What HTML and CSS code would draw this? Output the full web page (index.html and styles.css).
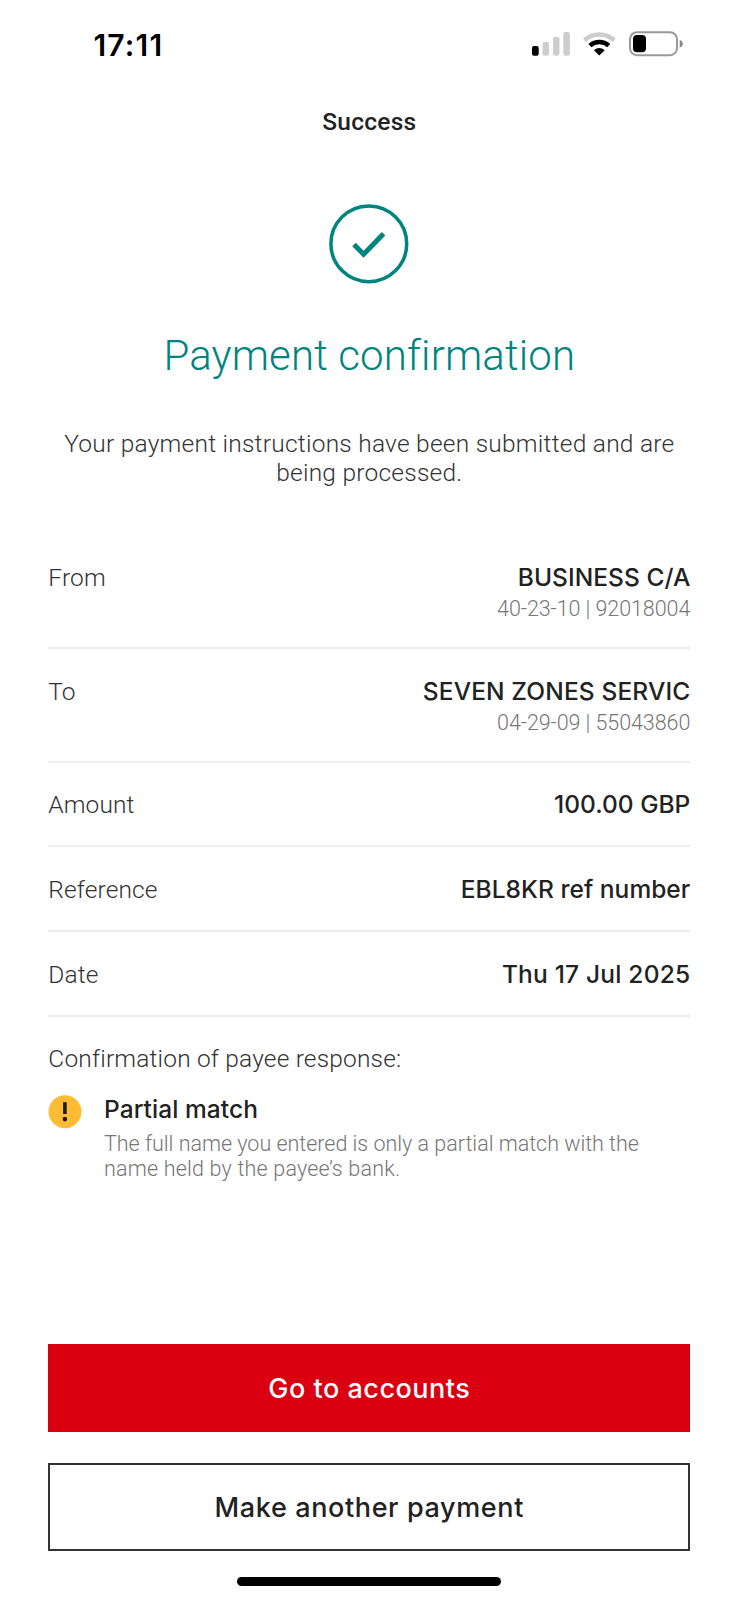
FILE: index.html
```
<!DOCTYPE html>
<html lang="en">
<head>
<meta charset="utf-8">
<title>Payment confirmation</title>
<link rel="stylesheet" href="styles.css">
</head>
<body>
<div class="screen">
  <div class="status-bar">
    <span class="clock">17:11</span>
    <svg class="status-icons" width="152" height="26" viewBox="532 31 152 26" aria-hidden="true">
      <rect x="532" y="46" width="6.7" height="9.8" rx="2" fill="#000"/>
      <g fill="#cdcdcd">
        <rect x="542.6" y="42" width="6.5" height="13.8" rx="2"/>
        <rect x="553" y="37" width="6.5" height="18.8" rx="2"/>
        <rect x="563.3" y="32" width="6.6" height="23.8" rx="2"/>
      </g>
      <path d="M584.4 40.3A22.2 22.2 0 0 1 614.2 40.3" fill="none" stroke="#cdcdcd" stroke-width="4.6"/>
      <path d="M589.9 45.6A14.2 14.2 0 0 1 608.7 45.6" fill="none" stroke="#000" stroke-width="4.6"/>
      <path d="M599.3 55.6L593.9 50.2Q599.3 45.6 604.7 50.2Z" fill="#000"/>
      <rect x="630" y="32.2" width="47" height="23" rx="7" fill="none" stroke="#999" stroke-width="2"/>
      <rect x="633" y="35" width="13" height="17.2" rx="4" fill="#000"/>
      <path d="M679.7 39.9Q682.8 40.8 682.8 43.7T679.7 47.5Z" fill="#888"/>
    </svg>
  </div>

  <header class="page-title">Success</header>

  <svg class="success-icon" width="80" height="80" viewBox="0 0 80 80" aria-hidden="true">
    <circle cx="39.8" cy="39.8" r="37.9" fill="none" stroke="#00847f" stroke-width="3.5"/>
    <path d="M25 40.6L34.6 50.2L54.6 29.8" fill="none" stroke="#00847f" stroke-width="5"/>
  </svg>

  <h1 class="heading">Payment confirmation</h1>
  <p class="message">Your payment instructions have been submitted and are<br>being processed.</p>

  <div class="details">
    <div class="row">
      <span class="label">From</span>
      <div class="value">
        <div class="main">BUSINESS C/A</div>
        <div class="sub">40-23-10 | 92018004</div>
      </div>
    </div>
    <div class="row">
      <span class="label">To</span>
      <div class="value">
        <div class="main name">SEVEN ZONES SERVIC</div>
        <div class="sub">04-29-09 | 55043860</div>
      </div>
    </div>
    <div class="row">
      <span class="label">Amount</span>
      <div class="value"><div class="main amount">100.00 GBP</div></div>
    </div>
    <div class="row">
      <span class="label">Reference</span>
      <div class="value"><div class="main">EBL8KR ref number</div></div>
    </div>
    <div class="row">
      <span class="label">Date</span>
      <div class="value"><div class="main date">Thu 17 Jul 2025</div></div>
    </div>
  </div>

  <div class="payee-title">Confirmation of payee response:</div>
  <div class="notice">
    <svg class="warning-icon" width="34" height="34" viewBox="0 0 34 34" aria-hidden="true">
      <circle cx="17" cy="16.7" r="16.5" fill="#ffbb33"/>
      <rect x="15.1" y="7.2" width="3.6" height="11.8" fill="#1a1a1a"/>
      <circle cx="16.9" cy="24.1" r="2.3" fill="#1a1a1a"/>
    </svg>
    <div class="notice-body">
      <div class="notice-title">Partial match</div>
      <p class="notice-text">The full name you entered is only a partial match with the<br><span class="second-line">name held by the payee’s bank.</span></p>
    </div>
  </div>

  <div class="actions">
    <button class="button primary">Go to accounts</button>
    <button class="button secondary">Make another payment</button>
  </div>
  <div class="home-indicator"></div>
</div>
</body>
</html>
```

FILE: styles.css
```
* {
  box-sizing: border-box;
}

body {
  margin: 0;
  background: #fff;
  color: #333;
  font-family: Roboto, "Liberation Sans", sans-serif;
  font-size: 24.5px;
  font-weight: 300;
}

.screen {
  width: 739px;
  height: 1600px;
  padding: 0 48.7px 0 48.3px;
  overflow: hidden;
  display: flex;
  flex-direction: column;
}

.status-bar {
  height: 88px;
  padding: 30px 6.8px 0 45.2px;
  display: flex;
  align-items: flex-start;
  justify-content: space-between;
}

.clock {
  font: 600 30px/30px Inter, sans-serif;
  letter-spacing: 1.2px;
  color: #000;
}

.status-icons {
  margin-top: 1px;
}

.page-title {
  padding-top: 19px;
  text-align: center;
  font-weight: 500;
  line-height: 30px;
  letter-spacing: 0.26px;
  color: #222;
}

.success-icon {
  margin-top: 67px;
  align-self: center;
}

.heading {
  margin: 47px 0 0;
  text-align: center;
  font-size: 42px;
  font-weight: 300;
  line-height: 50px;
  letter-spacing: 0.15px;
  color: #00847f;
}

.message {
  margin: 47.7px -10px 0;
  text-align: center;
  line-height: 29.3px;
  letter-spacing: 0.24px;
}

.details {
  margin-top: 48.4px;
}

.row {
  display: flex;
  justify-content: space-between;
  padding: 28.5px 0 25.1px;
  border-bottom: 2px solid #ededed;
}

.label {
  margin-bottom: 1px;
  line-height: 28px;
  letter-spacing: 0.12px;
}

.value {
  text-align: right;
}

.main {
  font-family: Inter, sans-serif;
  font-weight: 500;
  line-height: 27px;
  letter-spacing: 0.04px;
  color: #222;
}

.main.name {
  letter-spacing: 0.13px;
}

.main.amount {
  letter-spacing: 0;
}

.main.date {
  letter-spacing: 0.2px;
}

.sub {
  margin-top: 4px;
  font-size: 21.5px;
  line-height: 27px;
  letter-spacing: -0.07px;
  color: #767676;
}

.payee-title {
  margin-top: 28.8px;
  line-height: 28px;
  letter-spacing: 0.17px;
}

.notice {
  margin-top: 21.6px;
  display: flex;
  gap: 21.7px;
}

.warning-icon {
  flex: none;
}

.notice-title {
  font-family: Inter, sans-serif;
  font-weight: 500;
  line-height: 28px;
  letter-spacing: 0.06px;
  color: #222;
}

.notice-text {
  margin: 7.7px 0 0;
  font-size: 21.5px;
  line-height: 25px;
  letter-spacing: -0.02px;
  color: #767676;
  white-space: nowrap;
}

.second-line {
  letter-spacing: 0.19px;
}

.actions {
  margin-top: 163.5px;
  display: flex;
  flex-direction: column;
  gap: 31px;
}

.button {
  height: 88px;
  padding: 2px 0 0;
  border: 0;
  border-radius: 0;
  font: 500 27px/32px Inter, sans-serif;
}

.primary {
  background: #db0011;
  color: #fff;
  letter-spacing: 0.51px;
}

.secondary {
  background: #fff;
  border: 2px solid #333;
  color: #222;
  letter-spacing: 0.62px;
}

.home-indicator {
  flex: none;
  width: 264px;
  height: 8.4px;
  margin: 26px auto 0;
  border-radius: 5px;
  background: #000;
}
```
